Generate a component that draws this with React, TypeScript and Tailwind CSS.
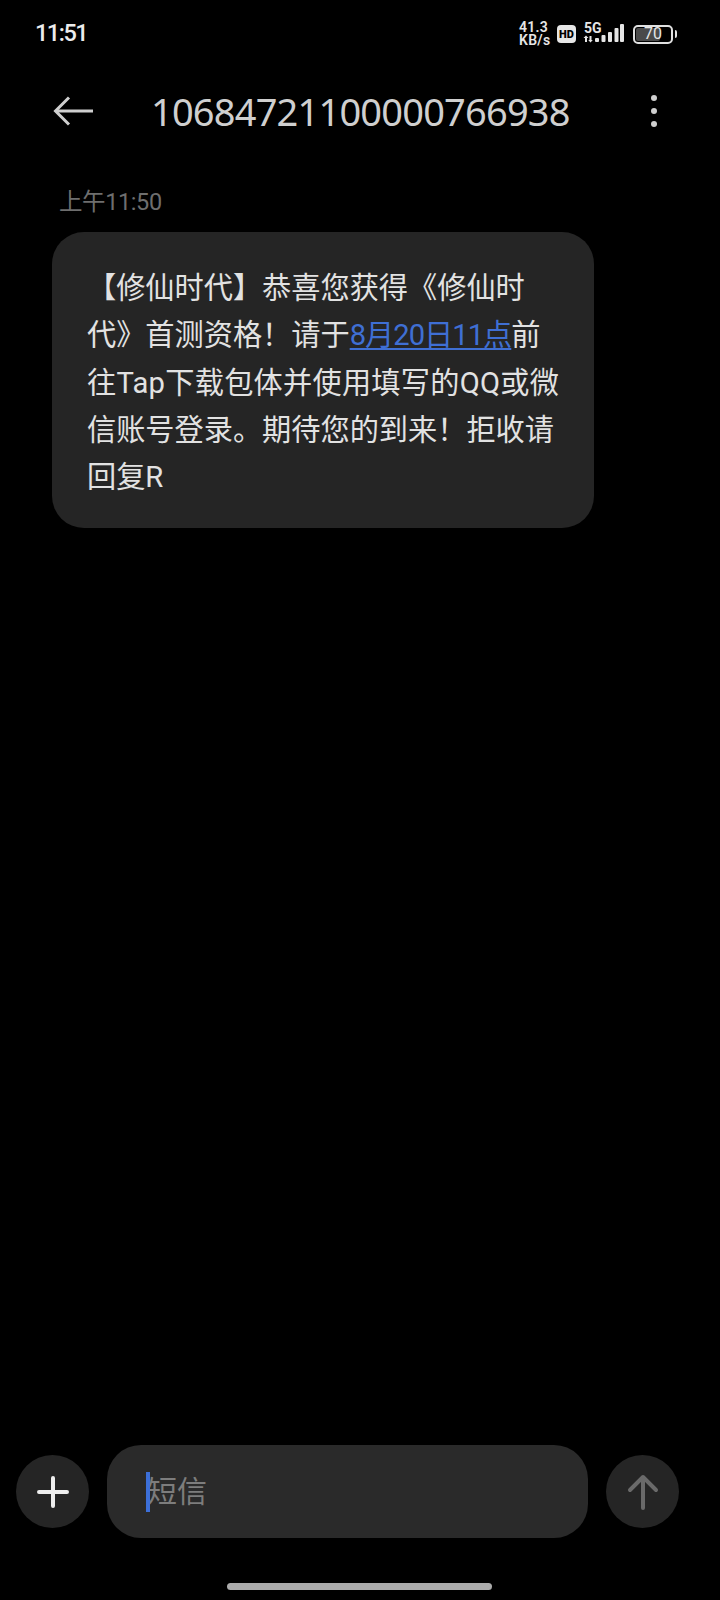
const FONT = "font-['Roboto','Noto_Sans_CJK_SC',sans-serif]";

function StatusBar() {
  return (
    <div className="flex h-[68px] items-center justify-between pl-[35px] pr-[43px]">
      <span className="text-[23.5px] font-medium leading-none tracking-[-1.5px] text-[#ececec]">11:51</span>
      <div className="flex items-center">
        <div className="w-[32px] whitespace-nowrap text-[14px] font-semibold leading-[13px] tracking-[0.3px] text-[#e6e6e6]">
          41.3
          <br />
          KB/s
        </div>
        <div className="ml-[6px] flex h-[18px] w-[19px] items-center justify-center rounded-[4px] bg-[#e6e6e6] text-[11px] font-black leading-none text-black">
          HD
        </div>
        <div className="relative ml-[7px] h-[22px] w-[41px]">
          <span className="absolute left-px top-[-2px] text-[14px] font-bold leading-[14px] text-[#e6e6e6]">5G</span>
          <svg className="absolute left-0 top-0" width="41" height="22" viewBox="0 0 41 22" fill="#e6e6e6">
            <path d="M2 19v-4H.5L3 12.500 5.500 15H4v4zM6.500 13v4H5.200L7.500 19.500 9.800 17H8.500v-4z" />
            <rect x="12" y="15" width="4" height="4" rx="1" />
            <rect x="18.500" y="12" width="4" height="7" rx="1" />
            <rect x="25" y="9" width="4" height="10" rx="1" />
            <rect x="31.500" y="5" width="4" height="14" rx="1" />
            <rect x="37" y="1" width="4" height="18" rx="1" />
          </svg>
        </div>
        <div className="ml-[9px] flex items-center">
          <div className="relative h-[19px] w-[40px] overflow-hidden rounded-[5px] border-2 border-[#e0e0e0] p-[1px]">
            <div className="h-full w-[70%] rounded-[2px] bg-[#4a4a4a]" />
            <span className="absolute inset-0 flex items-center justify-center text-[16px] leading-none text-[#e6e6e6]">70</span>
          </div>
          <div className="ml-[2px] h-[8px] w-[2px] rounded-r-[2px] bg-[#e0e0e0]" />
        </div>
      </div>
    </div>
  );
}

function Header() {
  return (
    <div className="flex h-[86px] items-center pl-[53px] pr-[63px]">
      <svg width="41" height="30" viewBox="0 0 41 30" fill="none" stroke="#cfcfcf" strokeWidth="3">
        <path d="M40 15H3" />
        <path d="M16 1.500 2.500 15 16 28.500" />
      </svg>
      <h1 className="ml-[57px] flex-1 font-['Noto_Sans',sans-serif] text-[38px] font-normal leading-none tracking-[-0.8px] text-[#cfcfcf]">
        10684721100000766938
      </h1>
      <div className="flex flex-col gap-[7px]">
        <span className="h-[6px] w-[6px] rounded-full bg-[#cfcfcf]" />
        <span className="h-[6px] w-[6px] rounded-full bg-[#cfcfcf]" />
        <span className="h-[6px] w-[6px] rounded-full bg-[#cfcfcf]" />
      </div>
    </div>
  );
}

function Message() {
  return (
    <div className="ml-[52px] mt-[16px] w-[542px] rounded-[32px] bg-[#252525] pb-[27px] pl-[35px] pt-[33px] text-[29.2px] leading-[47.25px] text-[#e2e2e2]">
      <p className="whitespace-nowrap">【修仙时代】恭喜您获得《修仙时</p>
      <p className="whitespace-nowrap">
        代》首测资格！请于
        <span className="tracking-[-1px] text-[#3f6fd4] underline underline-offset-[3px]">8月20日11点</span>前
      </p>
      <p className="whitespace-nowrap tracking-[0.25px]">往Tap下载包体并使用填写的QQ或微</p>
      <p className="whitespace-nowrap">信账号登录。期待您的到来！拒收请</p>
      <p className="whitespace-nowrap">回复R</p>
    </div>
  );
}

function Composer() {
  return (
    <div className="flex items-center pl-[16px]">
      <button className="flex h-[73px] w-[73px] items-center justify-center rounded-full bg-[#252525]">
        <svg width="32" height="32" viewBox="0 0 32 32" fill="none" stroke="#eeeeee" strokeWidth="4" strokeLinecap="round">
          <path d="M16 2v28M2 16h28" />
        </svg>
      </button>
      <div className="relative ml-[18px] flex h-[93px] w-[481px] items-center rounded-[34px] bg-[#2a2a2a] pl-[40px] text-[30px] text-[#7d7d7d]">
        <span className="leading-none">短信</span>
        <span className="absolute left-[39px] top-[27px] h-[40px] w-[4px] bg-[#3c6fd8]" />
      </div>
      <button className="ml-[18px] flex h-[73px] w-[73px] items-center justify-center rounded-full bg-[#252525]">
        <svg width="32" height="36" viewBox="0 0 32 36" fill="none" stroke="#6a6a6a" strokeWidth="4" strokeLinecap="round" strokeLinejoin="round">
          <path d="M16 34V3M3 16 16 3l13 13" />
        </svg>
      </button>
    </div>
  );
}

export default function App() {
  return (
    <div className={`flex h-[1600px] w-[720px] flex-col overflow-hidden bg-black ${FONT}`}>
      <StatusBar />
      <Header />
      <p className="ml-[59px] mt-[34px] text-[23.5px] leading-[28px] tracking-[-0.4px] text-[#6e6e6e]">上午11:50</p>
      <Message />
      <div className="flex-1" />
      <Composer />
      <div className="mb-[10px] mt-[45px] flex justify-center">
        <div className="ml-[-1px] h-[7px] w-[265px] rounded-full bg-[#ababab]" />
      </div>
    </div>
  );
}
